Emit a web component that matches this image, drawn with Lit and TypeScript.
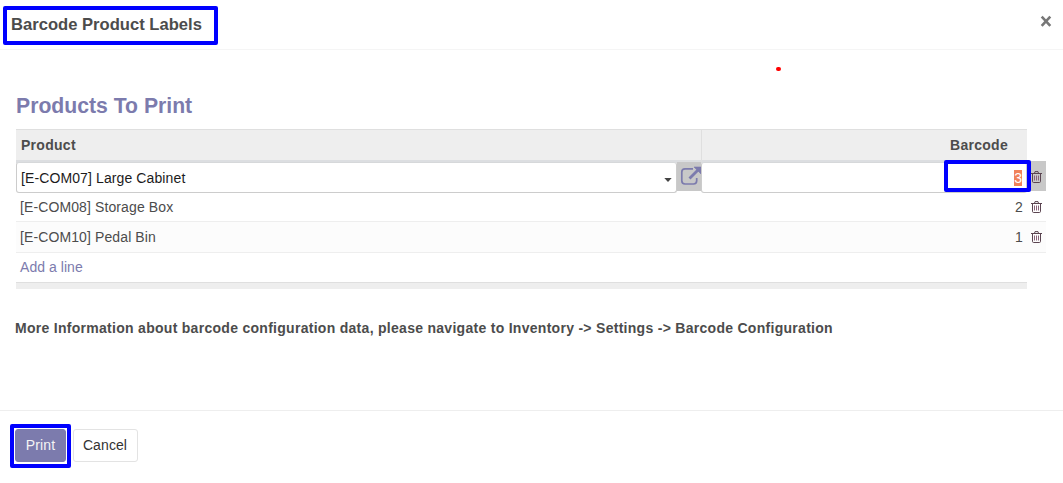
import { LitElement, html, css } from "lit";
import { customElement, state } from "lit/decorators.js";

interface Line {
  name: string;
  qty: number;
}

@customElement("trash-icon")
class TrashIcon extends LitElement {
  static styles = css`
    :host { display: block; width: 11px; height: 12px; }
    svg { display: block; }
  `;
  render() {
    return html`<svg width="11" height="12" viewBox="0 0 11 12" fill="none" stroke="#5b4450">
      <path d="M0 2.5H11M3.5 2.3L4 .6H7L7.5 2.3M1.5 2.5V10.3Q1.5 11.5 2.5 11.5H8.5Q9.5 11.5 9.5 10.3V2.5" />
      <path d="M3.5 4.5V9.5M5.5 4.5V9.5M7.5 4.5V9.5" stroke="#8a6479" />
    </svg>`;
  }
}

@customElement("app-root")
class AppRoot extends LitElement {
  @state() lines: Line[] = [
    { name: "[E-COM08] Storage Box", qty: 2 },
    { name: "[E-COM10] Pedal Bin", qty: 1 },
  ];

  static styles = css`
    :host {
      display: block;
      position: relative;
      width: 1063px;
      height: 483px;
      overflow: hidden;
      background: #fff;
      color: #4c4c4c;
      font: 14px/20px "Liberation Sans", Arial, sans-serif;
      letter-spacing: 0.11px;
    }
    * { box-sizing: border-box; }
    header {
      display: flex;
      justify-content: space-between;
      height: 50px;
      padding: 15px 11px 0 11px;
      border-bottom: 1px solid #f5f5f5;
    }
    h1 { margin: 0; font-size: 16.6px; line-height: 20px; letter-spacing: 0; }
    .close { width: 12px; height: 12px; }
    main { height: 360px; padding: 43px 16px 0; }
    h2 {
      margin: 0;
      height: 36px;
      font-size: 21.2px;
      line-height: 25px;
      color: #7c7bad;
      letter-spacing: 0;
    }
    .row { display: grid; grid-template-columns: 685px 326px 19px; width: 1030px; }
    .head { height: 33px; font-weight: bold; }
    .th { background: #eee; border-top: 1px solid #dfdfdf; border-bottom: 3px solid #dcdee1; padding: 5px; letter-spacing: 0.28px; }
    .th.num { border-left: 1px solid #dfdfdf; padding-right: 19px; text-align: right; }
    .edit { height: 30px; }
    .picker { display: grid; grid-template-columns: 661px 24px; }
    .input {
      height: 31px;
      background: #fff;
      border: 1px solid #ccc;
      border-top-color: #d6d8da;
      border-radius: 3px;
      padding: 5px 4px;
      color: #1c1c1c;
    }
    .select { display: flex; justify-content: space-between; }
    .caret { margin: 10px 0 0; width: 8px; height: 5px; }
    .open { background: #c8c8c8; height: 29px; padding: 4px 0 0 3px; }
    .qty { text-align: right; }
    .sel { background: #f0825a; color: #fff; display: inline-block; height: 16px; line-height: 17px; letter-spacing: 0; margin-top: 2px; }
    .del { padding: 9px 0 0 4px; }
    .edit .del { background: #c8c8c8; height: 30px; margin-top: -1px; padding-top: 10px; }
    .line { height: 30px; border-bottom: 1px solid #eee; line-height: 30px; }
    .line + .line { height: 31px; background: #fcfcfc; }
    .cell { padding: 0 4px; }
    .add { height: 29px; padding: 4px; color: #7c7bad; letter-spacing: 0.05px; }
    .foot { width: 1011px; height: 7px; background: #eee; border-top: 1px solid #dfdfdf; }
    .info { margin: 29px 0 0 -1px; font-weight: bold; letter-spacing: 0.285px; white-space: nowrap; }
    footer { border-top: 1px solid #eee; height: 73px; padding: 18px 15px; display: flex; gap: 7px; }
    button {
      height: 33px;
      border: 1px solid #e3e3e3;
      border-radius: 3px;
      background: #fff;
      color: #333;
      font: inherit;
      letter-spacing: 0.1px;
      padding: 0 1px 2px 0;
      width: 65px;
    }
    .primary { width: 51px; padding-right: 0; background: #7c7bad; color: #f4f4f4; border-color: #7c7bad; }
    .mark { position: absolute; border: 4px solid #00f; border-radius: 2px; }
    .m1 { left: 3px; top: 6px; width: 215px; height: 39px; }
    .m2 { left: 944px; top: 160px; width: 87px; height: 32px; }
    .m3 { left: 10px; top: 424px; width: 61px; height: 44px; }
    .dot { position: absolute; left: 776px; top: 67px; width: 5px; height: 4px; border-radius: 2px; background: #f00; }
  `;

  render() {
    return html`
      <header>
        <h1>Barcode Product Labels</h1>
        <svg class="close" viewBox="0 0 12 12"><path d="M1.7 1.7L10.3 10.9M10.3 1.7L1.7 10.9" stroke="#777" stroke-width="2.6" /></svg>
      </header>
      <main>
        <h2>Products To Print</h2>
        <div class="row head">
          <div class="th">Product</div>
          <div class="th num">Barcode</div>
        </div>
        <div class="row edit">
          <div class="picker">
            <div class="input select">
              <span>[E-COM07] Large Cabinet</span>
              <svg class="caret" viewBox="0 0 8 5"><path d="M.3 0H7.7L4 4Z" fill="#444" /></svg>
            </div>
            <div class="open">
              <svg width="21" height="20" viewBox="0 0 21 20" fill="none" stroke="#7c7bad">
                <path d="M13 2.8H5Q1.8 2.8 1.8 6V14.8Q1.8 18 5 18H13.5Q16.7 18 16.7 14.8V12" stroke-width="1.7" />
                <path d="M9.5 12.5L18 4" stroke-width="2.8" />
                <path d="M14 1H21V8Z" fill="#7c7bad" stroke="#7c7bad" stroke-width=".6" />
              </svg>
            </div>
          </div>
          <div class="input qty"><span class="sel">3</span></div>
          <div class="del"><trash-icon></trash-icon></div>
        </div>
        ${this.lines.map(
          (l) => html`<div class="row line">
            <div class="cell">${l.name}</div>
            <div class="cell qty">${l.qty}</div>
            <div class="del"><trash-icon></trash-icon></div>
          </div>`
        )}
        <div class="add">Add a line</div>
        <div class="foot"></div>
        <p class="info">More Information about barcode configuration data, please navigate to Inventory -&gt; Settings -&gt; Barcode Configuration</p>
      </main>
      <footer>
        <button class="primary">Print</button>
        <button>Cancel</button>
      </footer>
      <div class="mark m1"></div>
      <div class="mark m2"></div>
      <div class="mark m3"></div>
      <div class="dot"></div>
    `;
  }
}
